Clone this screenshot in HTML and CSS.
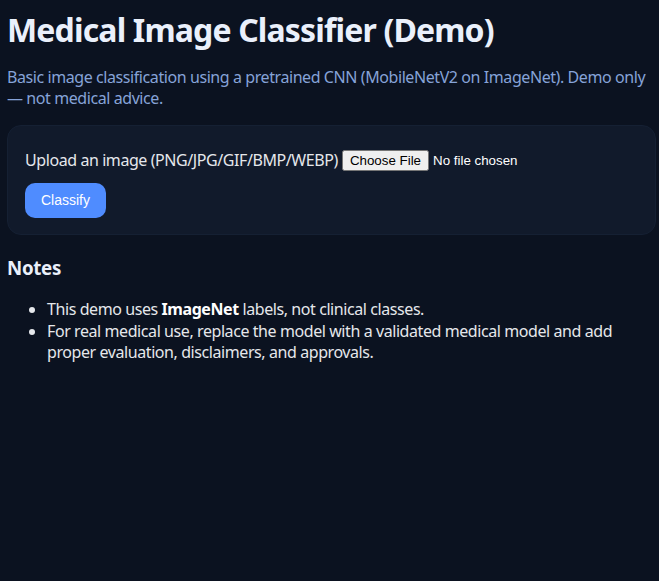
FILE: index.html
```html
<!DOCTYPE html>
<html lang="en">
<head>
<meta charset="utf-8">
<title>Medical Image Classifier (Demo)</title>
<link rel="stylesheet" href="styles.css">
</head>
<body>
<main class="page">
  <h1 class="title">Medical Image Classifier (Demo)</h1>
  <p class="subtitle">Basic image classification using a pretrained CNN (MobileNetV2 on ImageNet). Demo only — not medical advice.</p>
  <form class="card">
    <div class="row">
      <label class="upload-label" for="file">Upload an image (PNG/JPG/GIF/BMP/WEBP)</label>
      <input class="file" id="file" type="file" accept="image/*">
    </div>
    <button class="btn" type="button">Classify</button>
  </form>
  <h3 class="notes-title">Notes</h3>
  <ul class="notes">
    <li>This demo uses <strong>ImageNet</strong> labels, not clinical classes.</li>
    <li>For real medical use, replace the model with a validated medical model and add proper evaluation, disclaimers, and approvals.</li>
  </ul>
</main>
</body>
</html>
```
FILE: styles.css
```css
html, body {
  background: #0b1220;
}
body {
  margin: 0 3px 0 7px;
  font-family: "Segoe UI", "Noto Sans", "Open Sans", sans-serif;
  color: #e5e7eb;
  font-size: 16px;
  letter-spacing: -0.42px;
}
.title {
  margin: 0;
  padding-top: 9px;
  font-size: 32px;
  line-height: 42px;
  font-weight: 700;
  letter-spacing: -0.85px;
  color: #eaf0fb;
}
.subtitle {
  margin: 16px 0 0;
  line-height: 21px;
  color: #86a3d8;
}
.card {
  margin-top: 16px;
  background: #111a2b;
  border: 1px solid #152033;
  border-radius: 14px;
  padding: 24px 17px 16px;
  display: flex;
  flex-direction: column;
  align-items: flex-start;
  gap: 12px;
}
.row {
  display: flex;
  align-items: center;
  gap: 4px;
}
.upload-label {
  line-height: 21px;
  color: #e5e7eb;
}
.file {
  color: #ffffff;
  letter-spacing: 0;
}
.btn {
  background: #4f8cff;
  color: #ffffff;
  border: 0;
  border-radius: 10px;
  padding: 9px 16px;
  font-family: Arial, "Liberation Sans", sans-serif;
  font-size: 14px;
  line-height: 17px;
  letter-spacing: 0;
}
.notes-title {
  margin: 20px 0 0;
  font-size: 18.72px;
  line-height: 25px;
  letter-spacing: -0.3px;
  color: #eaf0fb;
}
.notes {
  margin: 19px 0 0;
  padding-left: 40px;
  line-height: 21.5px;
}
.notes strong {
  color: #ffffff;
}
```
